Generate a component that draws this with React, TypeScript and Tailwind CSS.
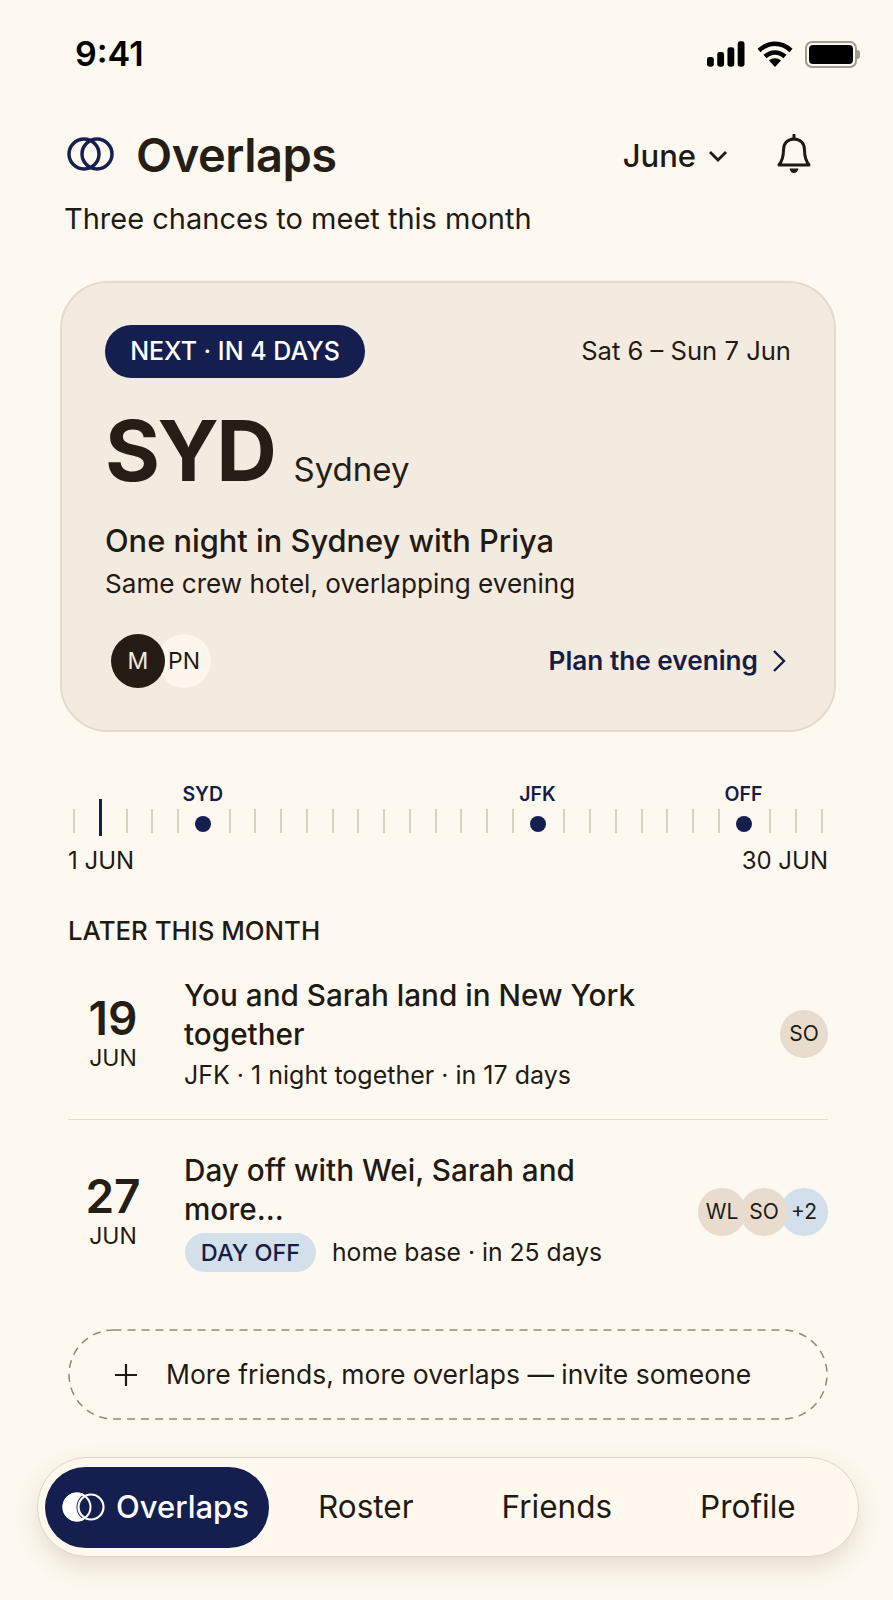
import { ReactNode } from 'react';

const ticks = Array.from({ length: 30 }, (_, i) => i);
const marks: Record<number, string> = { 5: 'SYD', 18: 'JFK', 26: 'OFF' };

function Rings() {
  return (
    <svg width="47" height="34" viewBox="0 0 47 34" fill="none" stroke="#17214f" strokeWidth="3.5">
      <circle cx="17" cy="17" r="15" />
      <circle cx="30" cy="17" r="15" />
    </svg>
  );
}

function StatusBar() {
  return (
    <div className="flex h-[68px] items-center justify-between pl-[75px] pr-[33px] pt-[40px]">
      <span className="text-[34px] font-semibold leading-none text-black">9:41</span>
      <div className="flex items-center gap-[12px]">
        <svg width="38" height="26" viewBox="0 0 39 26" fill="#000">
          <rect x="0" y="16" width="7" height="10" rx="2.500" />
          <rect x="10.5" y="11" width="7" height="15" rx="2.500" />
          <rect x="21" y="6" width="7" height="20" rx="2.500" />
          <rect x="31.5" y="0" width="7" height="26" rx="2.500" />
        </svg>
        <svg width="36" height="26" viewBox="0 0 36 26" fill="none" stroke="#000" strokeWidth="4.5">
          <path d="M2 9.5C11.5 .5 24.5 .5 34 9.5" />
          <path d="M8 15.5C14 10 22 10 28 15.5" />
          <path d="M18 26l-6-6.5c3.5-3 8.5-3 12 0z" fill="#000" stroke="none" />
        </svg>
        <div className="flex items-center">
          <div className="flex h-[27px] w-[52px] items-center justify-center rounded-[7px] border-[2.5px] border-[#a09c94] p-[2px]">
            <div className="h-full w-full rounded-[4px] bg-black" />
          </div>
          <div className="h-[9px] w-[3px] rounded-r-sm bg-[#a09c94]" />
        </div>
      </div>
    </div>
  );
}

function Header() {
  return (
    <div className="pl-[65px] pr-[62px]">
      <div className="flex h-[60px] items-center">
        <div className="ml-[2px]">
          <Rings />
        </div>
        <h1 className="ml-[22px] text-[47px] font-semibold leading-none tracking-[-0.01em] text-[#241e16]">Overlaps</h1>
        <div className="ml-auto flex items-center">
          <span className="mt-[3px] text-[31px] font-medium leading-none text-[#1f1a13]">June</span>
          <svg className="ml-[12px] mt-[3px]" width="20" height="12" viewBox="0 0 20 12" fill="none" stroke="#1f1a13" strokeWidth="2.8">
            <path d="M2 2l8 8 8-8" />
          </svg>
          <svg className="ml-[49px] mr-[20px]" width="34" height="40" viewBox="0 0 34 40" fill="none" stroke="#1f1a13" strokeWidth="3" strokeLinejoin="round">
            <path d="M17 5c-6.500 0-10.500 4.500-10.500 11 0 7-1.500 11-4.500 15h30c-3-4-4.500-8-4.500-15 0-6.500-4-11-10.500-11z" />
            <path d="M17 1v4" strokeLinecap="round" />
            <path d="M12.500 34.500h9c-.5 3-2.500 4.500-4.500 4.500s-4-1.500-4.500-4.500z" fill="#1f1a13" stroke="none" />
          </svg>
        </div>
      </div>
      <p className="-ml-[1px] mt-[17px] text-[29px] leading-[36px] text-[#1f1a13]">Three chances to meet this month</p>
    </div>
  );
}

function HeroCard() {
  return (
    <section className="ml-[60px] mr-[57px] mt-[44px] h-[451px] rounded-[48px] border-2 border-[#e4d9cb] bg-[#f3eae0] pl-[43px] pr-[43px] pt-[42px]">
      <div className="flex items-center justify-between">
        <span className="flex h-[53px] w-[260px] items-center justify-center rounded-full bg-[#141f50] text-[25px] font-medium text-white">
          NEXT · IN 4 DAYS
        </span>
        <span className="text-[25.6px] text-[#1f1a13]">Sat 6 – Sun 7 Jun</span>
      </div>
      <div className="mt-[27px] flex items-baseline">
        <span className="text-[84px] font-bold leading-[92px] tracking-[-0.03em] text-[#241e16]">SYD</span>
        <span className="ml-[19px] text-[33px] text-[#241e16]">Sydney</span>
      </div>
      <p className="mt-[24px] text-[30.8px] font-medium leading-[40px] text-[#1f1a13]">One night in Sydney with Priya</p>
      <p className="mt-[4px] text-[26.1px] leading-[38px] text-[#1f1a13]">Same crew hotel, overlapping evening</p>
      <div className="mt-[31px] flex items-center justify-between">
        <div className="ml-[6px] flex">
          <span className="z-10 flex h-[54px] w-[54px] items-center justify-center rounded-full bg-[#231d15] text-[23px] text-[#f3eae0]">M</span>
          <span className="-ml-[8px] flex h-[54px] w-[54px] items-center justify-center rounded-full bg-[#fdf6ec] text-[23px] text-[#1f1a13]">PN</span>
        </div>
        <div className="mr-[4px] flex items-center">
          <span className="text-[26.2px] font-semibold text-[#161d45]">Plan the evening</span>
          <svg className="ml-[14px]" width="15" height="24" viewBox="0 0 15 24" fill="none" stroke="#161d45" strokeWidth="2.4">
            <path d="M2 2l10 10-10 10" />
          </svg>
        </div>
      </div>
    </section>
  );
}

function Timeline() {
  return (
    <section className="mt-[67px] pl-[68px] pr-[65px]">
      <div className="flex h-[37px] items-start justify-between px-[5px]">
        {ticks.map(i => {
          if (marks[i]) {
            return (
              <div key={i} className="relative -ml-[1px] mr-[1px] mt-[10px] flex h-[24px] w-[2px] justify-center pt-[7px]">
                <span className="absolute -top-[27px] text-[19.5px] font-semibold leading-[24px] text-[#161d45]">{marks[i]}</span>
                <span className="h-[16px] w-[16px] shrink-0 rounded-full bg-[#141f50]" />
              </div>
            );
          }
          return i === 1 ? (
            <div key={i} className="h-[37px] w-[3px] bg-[#141f50]" />
          ) : (
            <div key={i} className="mt-[10px] h-[24px] w-[2px] bg-[#dbd1c3]" />
          );
        })}
      </div>
      <div className="mt-[10px] flex justify-between text-[24px] leading-[30px] text-[#1f1a13]">
        <span>1 JUN</span>
        <span>30 JUN</span>
      </div>
    </section>
  );
}

function Avatar({ children, className }: { children: ReactNode; className: string }) {
  return (
    <span className={`flex h-[48px] w-[48px] items-center justify-center rounded-full text-[21px] text-[#1f1a13] ${className}`}>
      {children}
    </span>
  );
}

function DateCol({ day }: { day: string }) {
  return (
    <div className="-mt-[3px] flex w-[90px] shrink-0 flex-col items-center">
      <span className="text-[46px] font-semibold leading-[50px] text-[#241e16]">{day}</span>
      <span className="mt-[1px] text-[23px] leading-[28px] text-[#1f1a13]">JUN</span>
    </div>
  );
}

function LaterList() {
  return (
    <section className="mt-[39px] pl-[68px] pr-[65px]">
      <h2 className="text-[25.8px] font-medium leading-[32px] text-[#1f1a13]">LATER THIS MONTH</h2>
      <div className="mt-[29px] flex items-center border-b border-[#e4dcd0] pb-[27px]">
        <DateCol day="19" />
        <div className="ml-[27px] flex-1">
          <p className="-ml-[1px] w-[480px] text-[29.7px] font-medium leading-[39px] text-[#1f1a13]">You and Sarah land in New York together</p>
          <p className="-ml-[1px] mt-[4px] text-[25px] leading-[34px] text-[#1f1a13]">JFK · 1 night together · in 17 days</p>
        </div>
        <Avatar className="bg-[#e8dccf]">SO</Avatar>
      </div>
      <div className="mt-[31px] flex items-center">
        <DateCol day="27" />
        <div className="ml-[27px] flex-1">
          <p className="-ml-[1px] w-[440px] text-[29.7px] font-medium leading-[39px] text-[#1f1a13]">Day off with Wei, Sarah and more...</p>
          <div className="mt-[4px] flex items-center">
            <span className="flex h-[39px] w-[131px] items-center justify-center rounded-full bg-[#d3dfea] text-[23.5px] font-medium text-[#161d45]">DAY OFF</span>
            <span className="ml-[16px] text-[24.7px] text-[#1f1a13]">home base · in 25 days</span>
          </div>
        </div>
        <div className="flex">
          <Avatar className="z-20 bg-[#e8dccf]">WL</Avatar>
          <Avatar className="z-10 -ml-[6px] bg-[#e8dccf]">SO</Avatar>
          <Avatar className="-ml-[8px] bg-[#d3dfea]">+2</Avatar>
        </div>
      </div>
    </section>
  );
}

function Invite() {
  return (
    <div className="relative ml-[68px] mr-[65px] mt-[57px] flex h-[91px] items-center pl-[46px]">
      {/* css dashes come out too short here, so the outline is drawn */}
      <svg className="absolute inset-0" width="760" height="91" viewBox="0 0 760 91" fill="none">
        <rect x="1" y="1" width="758" height="89" rx="44.500" stroke="#8f887e" strokeWidth="1.500" strokeDasharray="8 6" />
      </svg>
      <svg width="24" height="24" viewBox="0 0 24 24" fill="none" stroke="#1f1a13" strokeWidth="2.2">
        <path d="M12 1v22M1 12h22" />
      </svg>
      <span className="ml-[28px] text-[26.5px] text-[#1f1a13]">More friends, more overlaps — invite someone</span>
    </div>
  );
}

function BottomNav() {
  return (
    <nav className="ml-[37px] mr-[34px] mt-[37px] flex h-[100px] items-center rounded-[50px] border border-[#e0d5c6] bg-[#fef8ef] pl-[7px] shadow-[0_10px_24px_rgba(90,70,40,0.16)]">
      <div className="flex h-[81px] w-[224px] items-center rounded-full bg-[#141f50] pl-[17px]">
        <svg width="43" height="30" viewBox="0 0 43 30" fill="none">
          <circle cx="15" cy="15" r="14.500" fill="#fff" />
          <circle cx="29" cy="15" r="14.500" fill="#141f50" />
          <circle cx="15" cy="15" r="13.500" stroke="#fff" strokeWidth="2" />
          <circle cx="29" cy="15" r="12.500" stroke="#fff" strokeWidth="2.200" />
        </svg>
        <span className="ml-[11px] text-[31px] font-medium text-white">Overlaps</span>
      </div>
      <span className="ml-[49px] text-[31.5px] text-[#1f1a13]">Roster</span>
      <span className="ml-[88px] text-[31.5px] text-[#1f1a13]">Friends</span>
      <span className="ml-[88px] text-[31.5px] text-[#1f1a13]">Profile</span>
    </nav>
  );
}

export default function App() {
  return (
    <div className="h-[1600px] w-[893px] overflow-hidden bg-[#fef9f0] font-['Inter',sans-serif]">
      <StatusBar />
      <div className="h-[56px]" />
      <Header />
      <HeroCard />
      <Timeline />
      <LaterList />
      <Invite />
      <BottomNav />
    </div>
  );
}
